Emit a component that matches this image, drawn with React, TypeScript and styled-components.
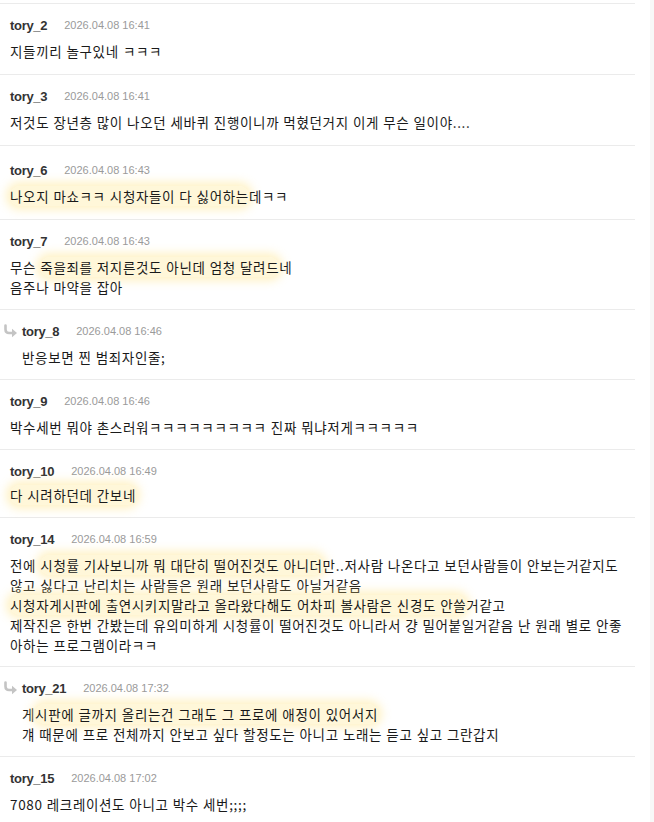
import React from "react";
import styled, { createGlobalStyle } from "styled-components";

const Global = createGlobalStyle`
  html, body { margin: 0; padding: 0; background: #ffffff; }
  body { font-family: "Noto Sans CJK KR", "Noto Sans", sans-serif; }
`;

const Page = styled.div`
  display: flex;
  width: 654px;
  min-height: 822px;
  overflow: hidden;
`;

const List = styled.div`
  width: 635px;
  padding-top: 3px;
  flex: none;
`;

const Gutter = styled.div`
  width: 15px;
  flex: none;
`;

const SideStrip = styled.div`
  flex: 1;
  background: #f8f8f8;
`;

const Row = styled.div<{ $top?: number; $bottom?: number }>`
  border-top: 1px solid #ebebeb;
  padding: ${(p) => p.$top ?? 12}px 0 ${(p) => p.$bottom ?? 12}px 10px;
`;

const Header = styled.div<{ $reply?: boolean }>`
  display: flex;
  align-items: center;
  height: 18px;
  margin-left: ${(p) => (p.$reply ? -7 : 0)}px;
`;

const ReplyIcon = styled.svg`
  width: 15px;
  height: 14px;
  margin-right: 4px;
  flex: none;
`;

const Name = styled.span`
  font-family: "Liberation Sans", Arial, sans-serif;
  font-weight: bold;
  font-size: 13px;
  letter-spacing: -0.3px;
  color: #333333;
`;

const Date = styled.span`
  font-family: "Liberation Sans", Arial, sans-serif;
  font-size: 11px;
  color: #9a9a9a;
  margin-left: 17px;
`;

const Body = styled.div<{ $reply?: boolean; $gap?: number }>`
  margin-top: ${(p) => p.$gap ?? 7}px;
  margin-left: ${(p) => (p.$reply ? 12 : 0)}px;
  font-size: 13.5px;
  letter-spacing: 0.65px;
  word-spacing: 0.5px;
  line-height: 20px;
  color: #1a1a1a;
  white-space: nowrap;
`;

const Mark = styled.span`
  background: rgba(255, 240, 185, 0.55);
  box-shadow: 0 0 10px 4px rgba(255, 224, 120, 0.42);
  border-radius: 10px;
`;

type Line = React.ReactNode;

interface CommentProps {
  name: string;
  date: string;
  lines: Line[];
  reply?: boolean;
  top?: number;
  bottom?: number;
  gap?: number;
}

const Arrow = () => (
  <ReplyIcon viewBox="0 0 15 14">
    <path
      d="M2.5 1.5 V5.5 Q2.5 9 6 9 H10"
      fill="none"
      stroke="#c4c4c4"
      strokeWidth="2.6"
      strokeLinecap="round"
    />
    <path d="M9 4.8 L14 9 L9 13.2 Z" fill="#c4c4c4" />
  </ReplyIcon>
);

const Comment = ({ name, date, lines, reply, top, bottom, gap }: CommentProps) => (
  <Row $top={top} $bottom={bottom}>
    <Header $reply={reply}>
      {reply && <Arrow />}
      <Name>{name}</Name>
      <Date>{date}</Date>
    </Header>
    <Body $reply={reply} $gap={gap}>
      {lines.map((l, i) => (
        <React.Fragment key={i}>
          {i > 0 && <br />}
          {l}
        </React.Fragment>
      ))}
    </Body>
  </Row>
);

export default function App() {
  return (
    <>
      <Global />
      <Page>
        <List>
          <Comment name="tory_2" date="2026.04.08 16:41" bottom={13} lines={["지들끼리 놀구있네 ㅋㅋㅋ"]} />
          <Comment
            name="tory_3"
            date="2026.04.08 16:41"
            bottom={13}
            lines={["저것도 장년층 많이 나오던 세바퀴 진행이니까 먹혔던거지 이게 무슨 일이야...."]}
          />
          <Comment
            name="tory_6"
            date="2026.04.08 16:43"
            top={15}
            bottom={13}
            lines={[
              <>
                <Mark>나오지 마쇼ㅋㅋ 시청자들이 다 싫어하는</Mark>데ㅋㅋ
              </>,
            ]}
          />
          <Comment
            name="tory_7"
            date="2026.04.08 16:43"
            lines={[
              <>
                무슨 <Mark>죽을죄를 저지른것도 아닌데 엄청 달려드</Mark>네
              </>,
              "음주나 마약을 잡아",
            ]}
          />
          <Comment name="tory_8" date="2026.04.08 16:46" reply lines={["반응보면 찐 범죄자인줄;"]} />
          <Comment
            name="tory_9"
            date="2026.04.08 16:46"
            lines={["박수세번 뭐야 촌스러워ㅋㅋㅋㅋㅋㅋㅋㅋㅋ 진짜 뭐냐저게ㅋㅋㅋㅋㅋ"]}
          />
          <Comment
            name="tory_10"
            date="2026.04.08 16:49"
            gap={5}
            lines={[<Mark key="m">다 시려하던데 간보네</Mark>]}
          />
          <Comment
            name="tory_14"
            date="2026.04.08 16:59"
            bottom={11}
            lines={[
              <>
                전에 <Mark>시청률 기사보니까 뭐 대단히 떨어진것도 아니더</Mark>만..저사람 나온다고 보던사람들이 안보는거같지도
              </>,
              "않고 싫다고 난리치는 사람들은 원래 보던사람도 아닐거같음",
              <>
                <Mark>시청자게시판에 출연시키지말라고 올라왔다해도 어차피 볼사람은 신경도 안쓸</Mark>거같고
              </>,
              "제작진은 한번 간봤는데 유의미하게 시청률이 떨어진것도 아니라서 걍 밀어붙일거같음 난 원래 별로 안좋",
              "아하는 프로그램이라ㅋㅋ",
            ]}
          />
          <Comment
            name="tory_21"
            date="2026.04.08 17:32"
            reply
            lines={[
              <>
                게<Mark>시판에 글까지 올리는건 그래도 그 프로에 애정이 있어서지</Mark>
              </>,
              "걔 때문에 프로 전체까지 안보고 싶다 할정도는 아니고 노래는 듣고 싶고 그란갑지",
            ]}
          />
          <Comment name="tory_15" date="2026.04.08 17:02" lines={["7080 레크레이션도 아니고 박수 세번;;;;"]} />
        </List>
        <Gutter />
        <SideStrip />
      </Page>
    </>
  );
}
